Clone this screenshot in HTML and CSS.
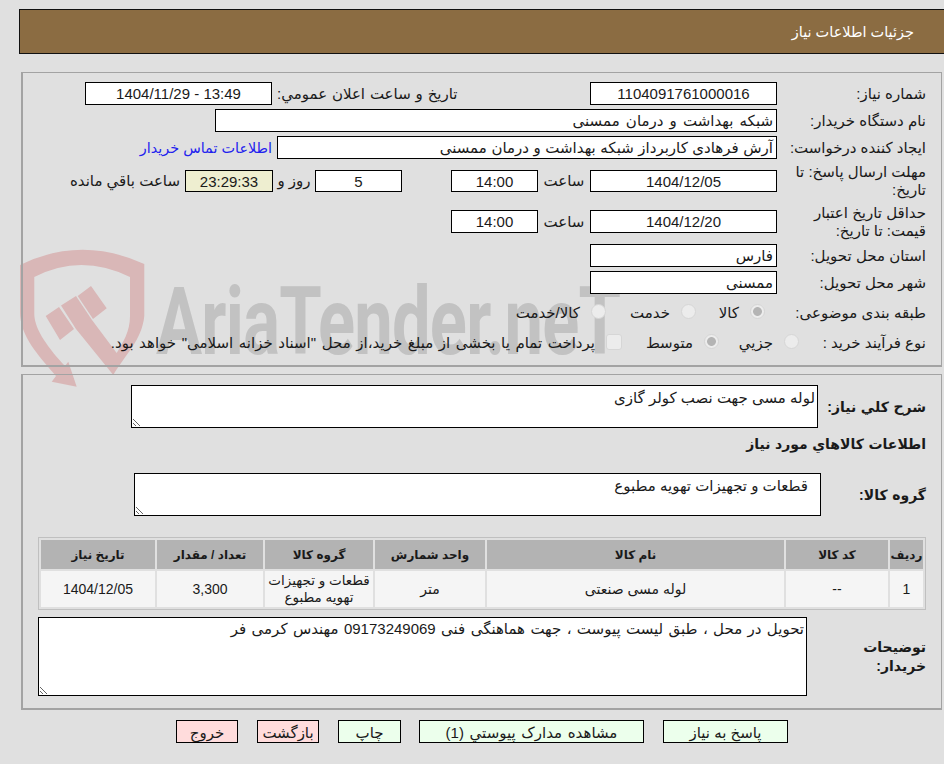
FILE: index.html
```html
<!DOCTYPE html>
<html lang="fa" dir="rtl">
<head>
<meta charset="utf-8">
<title>جزئیات اطلاعات نیاز</title>
<link rel="stylesheet" href="styles.css">
</head>
<body>
<div class="watermark" aria-hidden="true">
  <svg class="shield" viewBox="0 0 125 137" width="125" height="137">
    <path fill="#d9b7b7" d="M0 15 Q61 -15 124.3 14 L124.3 66 C122 90 105 105 93.3 125 L56 79 L41 55.5 L56 46 L72 70 L96.7 103 C103 92 110 82 110 66 L110 27 Q61 3 14.3 27 L14.3 64 C14.3 80 30 100 45 116 L48.3 111.7 L56.7 136.7 L31.7 131.7 L36 126 C18 105 0 86 0 62 Z"/>
    <path fill="#d9b7b7" d="M25.7 66 L39 57 L54 79 L40 90 Z M57.7 46 L71 36 L86.7 58.3 L73 69 Z"/>
  </svg>
  <span class="logo-text">AriaTender.neT</span>
</div>

<header class="page-title">جزئیات اطلاعات نیاز</header>

<section class="panel info">
  <div class="row r1">
    <label class="lbl">شماره نیاز:</label>
    <div class="box w-short center">1104091761000016</div>
    <span class="side-date">تاریخ و ساعت اعلان عمومي:</span>
    <div class="box w-short center">13:49 - 1404/11/29</div>
  </div>
  <div class="row r2">
    <label class="lbl">نام دستگاه خریدار:</label>
    <div class="box w-buyer">شبکه بهداشت و درمان ممسنی</div>
  </div>
  <div class="row r3">
    <label class="lbl">ایجاد کننده درخواست:</label>
    <div class="box w-maker">آرش فرهادی کاربرداز شبکه بهداشت و درمان ممسنی</div>
    <a class="contact" href="#">اطلاعات تماس خریدار</a>
  </div>
  <div class="row r4">
    <label class="lbl two">مهلت ارسال پاسخ: تا تاریخ:</label>
    <div class="box w-short center">1404/12/05</div>
    <span class="unit">ساعت</span>
    <div class="box w-time center">14:00</div>
    <div class="box w-time center day">5</div>
    <span class="unit and">روز و</span>
    <div class="box timer center">23:29:33</div>
    <span class="unit rest">ساعت باقي مانده</span>
  </div>
  <div class="row r5">
    <label class="lbl two">حداقل تاریخ اعتبار قیمت: تا تاریخ:</label>
    <div class="box w-short center">1404/12/20</div>
    <span class="unit">ساعت</span>
    <div class="box w-time center">14:00</div>
  </div>
  <div class="row r6">
    <label class="lbl">استان محل تحویل:</label>
    <div class="box w-short">فارس</div>
  </div>
  <div class="row r7">
    <label class="lbl">شهر محل تحویل:</label>
    <div class="box w-short">ممسنی</div>
  </div>
  <div class="row r8">
    <label class="lbl">طبقه بندی موضوعی:</label>
    <span class="opt o-kala"><input type="radio" name="cat" disabled checked><span>کالا</span></span>
    <span class="opt o-service"><input type="radio" name="cat" disabled><span>خدمت</span></span>
    <span class="opt o-both"><input type="radio" name="cat" disabled><span>کالا/خدمت</span></span>
  </div>
  <div class="row r9">
    <label class="lbl">نوع فرآیند خرید :</label>
    <span class="opt o-small"><input type="radio" name="proc" disabled><span>جزیي</span></span>
    <span class="opt o-mid"><input type="radio" name="proc" disabled checked><span>متوسط</span></span>
    <span class="opt o-pay"><input type="checkbox" disabled><span>پرداخت تمام یا بخشی از مبلغ خرید،از محل "اسناد خزانه اسلامی" خواهد بود.</span></span>
  </div>
</section>

<section class="panel detail">
  <div class="row d1">
    <label class="lbl bold">شرح كلي نياز:</label>
    <textarea class="area a-desc" readonly>لوله مسی جهت نصب کولر گازی</textarea>
  </div>
  <h2 class="subhead">اطلاعات كالاهاي مورد نياز</h2>
  <div class="row d2">
    <label class="lbl bold">گروه کالا:</label>
    <textarea class="area a-group" readonly>قطعات و تجهیزات تهویه مطبوع</textarea>
  </div>
  <table class="items">
    <colgroup>
      <col class="c1"><col class="c2"><col class="c3"><col class="c4"><col class="c5"><col class="c6"><col class="c7">
    </colgroup>
    <thead>
      <tr><th>ردیف</th><th>کد کالا</th><th>نام کالا</th><th>واحد شمارش</th><th>گروه کالا</th><th>تعداد / مقدار</th><th>تاریخ نیاز</th></tr>
    </thead>
    <tbody>
      <tr><td>1</td><td>--</td><td>لوله مسی صنعتی</td><td>متر</td><td class="grp">قطعات و تجهیزات تهویه مطبوع</td><td>3,300</td><td>1404/12/05</td></tr>
    </tbody>
  </table>
  <div class="row d3">
    <label class="lbl bold note">توضیحات خریدار:</label>
    <textarea class="area a-note" readonly>تحویل در محل ، طبق لیست پیوست ، جهت هماهنگی فنی 09173249069 مهندس کرمی فر</textarea>
  </div>
</section>

<nav class="actions">
  <button class="btn go b-reply">پاسخ به نیاز</button>
  <button class="btn go b-docs">مشاهده مدارک پیوستي (1)</button>
  <button class="btn go b-print">چاپ</button>
  <button class="btn stop b-back">بازگشت</button>
  <button class="btn stop b-exit">خروج</button>
</nav>
</body>
</html>
```
FILE: styles.css
```css
* { box-sizing: border-box; }
html, body { margin: 0; height: 764px; overflow: hidden; }
body {
  position: relative;
  background: #e0e0e0;
  color: #1a1a1a;
  font: 15px/18px "Liberation Sans", "DejaVu Sans", sans-serif;
  padding-top: 9px;
}
.watermark { position: absolute; left: 0; top: 0; width: 944px; height: 400px; }
.shield { position: absolute; left: 20px; top: 250px; overflow: visible; }
.logo-text {
  position: absolute;
  left: 156px;
  top: 272px;
  direction: ltr;
  font: 700 94px/100px "Roboto", sans-serif;
  letter-spacing: -1px;
  color: #c2c2c2;
  white-space: nowrap;
  transform-origin: left top;
  transform: scaleX(.73);
}
.page-title {
  position: relative;
  height: 45px;
  margin-left: 19px;
  padding: 13px 30px 0 0;
  background: #8b6c42;
  border: 1px solid #111;
  border-right-width: 0;
  color: #fff;
  font-size: 14.5px;
}
.panel {
  position: relative;
  width: 921px;
  margin-right: 2px;
  border: 1px solid #a3a3a3;
  border-width: 1px 1px 2px 2px;
  padding-right: 15px;
}
.info { height: 295px; margin-top: 18px; padding-top: 9px; }
.detail { height: 336px; margin-top: 7px; padding-top: 10px; }
.row { display: flex; align-items: center; }
.lbl { width: 149px; flex: none; }
.r5 .lbl { padding-left: 24px; }
.box {
  height: 23px;
  padding: 1px 3px 0;
  background: #fff;
  border: 1px solid #000;
  flex: none;
  line-height: 20px;
  white-space: nowrap;
  overflow: hidden;
}
.center { text-align: center; }
.w-short { width: 187px; }
.w-buyer { width: 562px; word-spacing: 2px; }
.w-maker { width: 500px; word-spacing: .4px; }
.w-time { width: 87px; }
.side-date { width: 318px; flex: none; padding-left: 5px; text-align: left; white-space: nowrap; word-spacing: .7px; }
.contact { margin-right: 5px; color: #2222ee; text-decoration: none; white-space: nowrap; font-size: 14.4px; }
.r1, .r2, .r3, .r6, .r7 { height: 23px; }
.r2, .r3 { margin-top: 4px; }
.r4 { margin-top: 11px; height: 22px; }
.r4 .box { height: 22px; }
.r5 { margin-top: 18px; height: 23px; }
.r6 { margin-top: 11px; }
.r7 { margin-top: 4px; }
.r8 { margin-top: 8px; height: 22px; }
.r9 { margin-top: 8px; height: 22px; }
.unit { flex: none; width: 52px; text-align: center; white-space: nowrap; }
.day { margin-right: 49px; }
.and { width: 42px; }
.timer { width: 88px; background: #eeeed0; }
.rest { width: auto; margin-right: 5px; }
.opt { display: inline-flex; align-items: center; flex: none; white-space: nowrap; word-spacing: .5px; }
.opt input {
  appearance: none;
  flex: none;
  width: 15px;
  height: 15px;
  margin: -3px 0 0 0;
  background: #ececec;
  border: 1px solid #d6d6d6;
  border-radius: 50%;
}
.opt input:checked { background: radial-gradient(circle, #b4b4b4 0 4px, #ececec 4.8px); }
.opt input[type=checkbox] { border-radius: 3px; width: 16px; height: 16px; }
.opt > span { margin-right: 11px; }
.o-kala { margin-right: 12px; width: 69px; }
.o-service { width: 90px; }
.o-small { margin-right: -22px; width: 80px; }
.o-mid { width: 97px; }
.o-pay { word-spacing: 1.4px; }
.area {
  display: block;
  flex: none;
  background: #fff;
  border: 1px solid #000;
  border-radius: 0;
  padding: 3px 2px 2px;
  margin: 0;
  color: #1a1a1a;
  font: inherit;
  outline: 0;
}
.a-desc { width: 687px; height: 43px; }
.a-group { width: 687px; height: 43px; padding-right: 12px; }
.a-note { width: 769px; height: 79px; padding-top: 2px; word-spacing: 1.2px; }
.bold { font-weight: 700; font-size: 14px; line-height: 19px; white-space: nowrap; word-spacing: .7px; }
.d1 .bold, .d2 .bold { padding-top: 2px; }
.d1 .lbl { width: 108px; }
.d2 { margin-top: 14px; }
.d2 .lbl { width: 105px; }
.subhead { margin: 7px 0 0; height: 24px; font-size: 14px; line-height: 19px; word-spacing: .7px; }
.items {
  width: 888px;
  margin: 21px 0 0;
  table-layout: fixed;
  border: 1px solid #c0c0c0;
  border-spacing: 2px;
  text-align: center;
  font-size: 14px;
}
.c1 { width: 33px; } .c2 { width: 102px; } .c3 { width: 297px; }
.c4 { width: 110px; } .c5 { width: 108px; } .c6 { width: 106px; } .c7 { width: 114px; }
.items th { height: 29px; padding: 0; background: #b3b3b3; font-size: 12px; }
.items td { height: 36px; padding: 0; background: #f5f5f5; line-height: 17px; }
.items .grp { font-size: 13.5px; }
.d3 { margin-top: 7px; }
.d3 .lbl { width: 119px; }
.note { padding-left: 30px; white-space: normal; }
.actions { position: relative; display: flex; gap: 19px; margin: 10px 156px 0 0; }
.btn {
  height: 23px;
  padding: 2px 0 0;
  border: 1px solid #000;
  border-radius: 0;
  color: #1a1a1a;
  font: inherit;
  line-height: 18px;
}
.go { background: #ecffec; }
.stop { background: #ffdcdc; }
.b-reply { width: 125px; }
.b-docs { width: 225px; word-spacing: 1.5px; }
.b-print { width: 63px; margin-right: -1px; }
.b-back, .b-exit { width: 62px; }
```
